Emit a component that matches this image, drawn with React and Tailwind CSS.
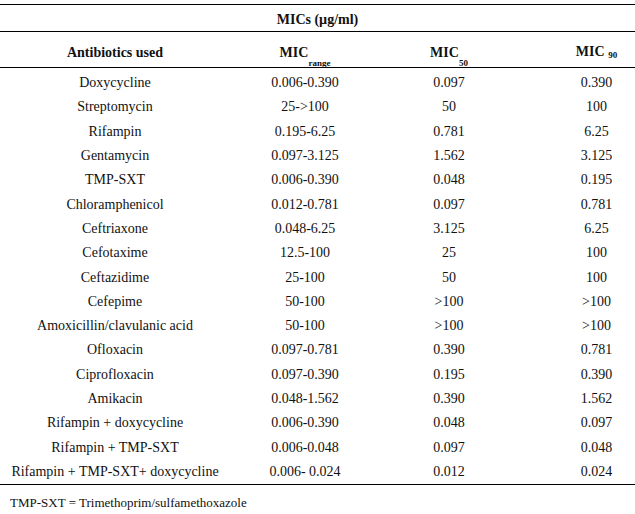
import React from 'react';

const rows = [
    ['Doxycycline', '0.006-0.390', '0.097', '0.390'],
    ['Streptomycin', '25->100', '50', '100'],
    ['Rifampin', '0.195-6.25', '0.781', '6.25'],
    ['Gentamycin', '0.097-3.125', '1.562', '3.125'],
    ['TMP-SXT', '0.006-0.390', '0.048', '0.195'],
    ['Chloramphenicol', '0.012-0.781', '0.097', '0.781'],
    ['Ceftriaxone', '0.048-6.25', '3.125', '6.25'],
    ['Cefotaxime', '12.5-100', '25', '100'],
    ['Ceftazidime', '25-100', '50', '100'],
    ['Cefepime', '50-100', '>100', '>100'],
    ['Amoxicillin/clavulanic acid', '50-100', '>100', '>100'],
    ['Ofloxacin', '0.097-0.781', '0.390', '0.781'],
    ['Ciprofloxacin', '0.097-0.390', '0.195', '0.390'],
    ['Amikacin', '0.048-1.562', '0.390', '1.562'],
    ['Rifampin + doxycycline', '0.006-0.390', '0.048', '0.097'],
    ['Rifampin + TMP-SXT', '0.006-0.048', '0.097', '0.048'],
    ['Rifampin + TMP-SXT+ doxycycline', '0.006- 0.024', '0.012', '0.024'],
];

const App = () => {
    return (
        <div className="w-[635px] h-[514px] bg-white text-[#111] pt-[4px] font-['Liberation_Serif','Times_New_Roman',serif]">

            {/* Table */}
            <div className="border-t-[1.5px] border-b-[1.5px] border-black">

                <div className="h-[27px] pt-[3px] flex items-center justify-center border-b-[1.5px] border-black text-[14px] font-bold">
                    MICs (µg/ml)
                </div>

                <div className="h-[36px] pt-[5px] grid grid-cols-[230px_150px_138px_117px] items-center border-b-[1.5px] border-black text-[14px] font-bold">
                    <div className="text-center">Antibiotics used</div>
                    <div className="text-center">
                        MIC<sub className="text-[9px] align-[-7px]">range</sub>
                    </div>
                    <div className="text-center">
                        MIC<sub className="text-[9px] align-[-7px]">50</sub>
                    </div>
                    <div className="text-center pl-[40px]">
                        MIC <span className="text-[9px] align-[-2px]">90</span>
                    </div>
                </div>

                <div className="pt-[3px]">
                    {rows.map(r => (
                        <div key={r[0]}
                            className="h-[24.3px] grid grid-cols-[230px_150px_138px_117px] items-center text-[14px] leading-none">
                            <div className="text-center">{r[0]}</div>
                            <div className="text-center">{r[1]}</div>
                            <div className="text-center">{r[2]}</div>
                            <div className="text-center pl-[40px]">{r[3]}</div>
                        </div>
                    ))}
                </div>
            </div>

            {/* Note */}
            <p className="pl-[10px] pt-[8px] text-[13px]">
                TMP-SXT = Trimethoprim/sulfamethoxazole
            </p>
        </div>
    );
};

export default App;
